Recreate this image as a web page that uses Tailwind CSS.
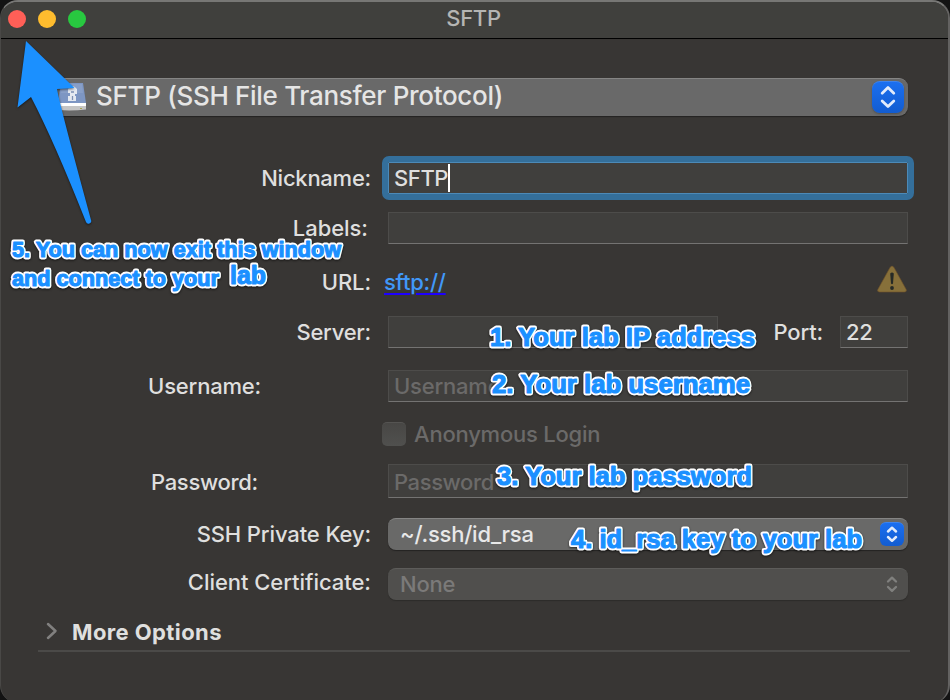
<!DOCTYPE html>
<html lang="en">
<head>
<meta charset="utf-8">
<title>SFTP</title>
<script src="https://cdn.jsdelivr.net/npm/@tailwindcss/browser@4"></script>
</head>
<body class="bg-black">
<div class="relative w-[950px] h-[700px] overflow-hidden bg-[#131313] font-['Inter','Noto_Sans',sans-serif] font-[450] text-[22px] text-[#dfdfde]">
  <main class="w-[950px] h-[703px] flex flex-col overflow-hidden rounded-[18px] bg-[#383634] border-t-2 border-r-2 border-t-[#777775] border-r-[#636261] border-l border-l-[#494846]">
    <header class="relative h-[37px] shrink-0 flex items-center gap-3 pl-[7px] pb-[2px] bg-[#40403d] border-b-[1.5px] border-black">
      <i class="size-[18px] -mt-px rounded-full bg-[#ff5f57]"></i>
      <i class="size-[18px] -mt-px rounded-full bg-[#febc2e]"></i>
      <i class="size-[18px] -mt-px rounded-full bg-[#28c840]"></i>
      <h1 class="absolute inset-x-0 top-0 pr-[2px] text-center leading-[33px] text-[#b5b5b3] tracking-[-0.3px] font-[450]">SFTP</h1>
    </header>

    <section class="flex flex-col pl-[37px] pr-[40px] pt-[39px]">
      <div class="h-[38px] flex items-center ml-2 pl-[12px] pr-1 rounded-[9px] bg-[#696969] border-t border-[#858584] shadow-[0_1px_1px_#242322]">
        <svg class="w-[28px] h-[30px] shrink-0 -mt-[3px]" viewBox="0 0 28 30">
          <path d="M3 2H25L28 22H0Z" fill="#7d96c3"/>
          <path d="M4 3H24L25 12H3Z" fill="#889fc8"/>
          <path d="M10 12V8Q14 2 19 8V13H17V15H18V20H10V15H12V12Z" fill="#e4e9f1"/>
          <path d="M13 11H16M14.500 15V19" stroke="#7e91b5" stroke-width="1.300"/>
          <path d="M0 22H28V28.500Q14 30 0 29Z" fill="#c5c5c5"/>
          <path d="M0 22H28V25H0Z" fill="#fff"/>
          <path d="M22 27.500H24" stroke="#a8a44f"/>
        </svg>
        <span class="ml-[10px] -mt-[3px] text-[26px] leading-[34px] tracking-[-0.31px] text-[#e5e5e5]">SFTP (SSH File Transfer Protocol)</span>
        <span class="ml-auto size-[32px] rounded-[8px] bg-linear-to-b from-[#1b6ff0] to-[#125cd0] shadow-[0_1px_2px_#3337] border-t border-[#3b83ef] -mt-px">
          <svg class="size-[31px]" viewBox="0 0 32 32" fill="none" stroke="#e2ebfb" stroke-width="2.900" stroke-linecap="round" stroke-linejoin="round"><path d="M10.500 11.500L16.500 5.700L22.500 11.500M10.500 19.500L16.500 25.300L22.500 19.500"/></svg>
        </span>
      </div>

      <div class="h-[32px] mt-[46px] flex items-center">
        <label class="w-[333px] mr-[17px] text-right whitespace-nowrap tracking-[-0.25px]">Nickname:</label>
        <div class="flex-1 h-[32px] flex items-center pl-[5px] bg-[#403f3d] border border-[#4c8ab8] outline-[6px] outline-[#346f9b] rounded-[1px]"><span class="tracking-[-0.4px]">SFTP</span><i class="w-[2px] h-[28px] bg-white"></i></div>
      </div>

      <div class="h-[32px] mt-[18px] flex items-center">
        <label class="w-[330px] mr-[20px] text-right tracking-[-0.05px]">Labels:</label>
        <div class="flex-1 h-[32px] bg-[#403f3d] border border-[#4d4c4a] border-b-[#747372]"></div>
      </div>

      <div class="h-[32px] mt-[22px] flex items-center">
        <label class="w-[333px] mr-[13px] text-right tracking-[-0.1px]">URL:</label>
        <a class="text-[#4198f8] underline decoration-[#1e00ff] decoration-2 underline-offset-[3px] tracking-[-0.25px]">sftp://</a>
        <svg class="ml-auto mr-px w-[30px] h-[28px] mb-[7px]" viewBox="0 0 30 28">
          <path d="M13 2.500Q15 -.5 17 2.500L29.200 24.500Q30 27 27.500 27H2.500Q0 27 .8 24.500Z" fill="#87703a" stroke="#705329" stroke-width=".6"/>
          <path d="M13.200 8.500Q15 6.500 16.800 8.500L16 18.500Q15 20 14 18.500Z" fill="#262a26"/><circle cx="15" cy="23" r="1.900" fill="#262a26"/>
        </svg>
      </div>

      <div class="h-[32px] mt-[18px] flex items-center">
        <label class="w-[333px] mr-[17px] text-right tracking-[-0.25px]">Server:</label>
        <div class="w-[330px] h-[32px] bg-[#403f3d] border border-[#4d4c4a] border-b-[#747372]"></div>
        <label class="w-[105px] mr-[17px] text-right tracking-[-0.15px]">Port:</label>
        <div class="w-[68px] h-[32px] flex items-center pl-[5px] bg-[#403f3d] border border-[#4d4c4a] border-b-[#747372] tracking-[-0.3px]">22</div>
      </div>

      <div class="h-[32px] mt-[22px] flex items-center">
        <label class="w-[223px] mr-[127px] text-right tracking-[-0.2px]">Username:</label>
        <div class="flex-1 h-[32px] flex items-center pl-[5px] bg-[#403f3d] border border-[#4d4c4a] border-b-[#747372] text-[#6b6a69] tracking-[-0.2px]">Username</div>
      </div>

      <div class="h-[24px] mt-[20px] ml-[344px] flex items-center gap-[8px] text-[#6b6a69]">
        <i class="size-[24px] rounded-[5px] bg-linear-to-b from-[#484745] to-[#50504e] border-t border-[#555452]"></i>
        <span class="tracking-[-0.22px]">Anonymous Login</span>
      </div>

      <div class="h-[34px] mt-[18px] flex items-center">
        <label class="w-[220px] mr-[130px] pt-[2px] text-right tracking-[-0.3px]">Password:</label>
        <div class="flex-1 h-[34px] flex items-center pl-[5px] pt-[2px] bg-[#403f3d] border border-[#4d4c4a] border-b-[#747372] text-[#6b6a69] tracking-[-0.4px]">Password</div>
      </div>

      <div class="h-[32px] mt-[20px] flex items-center">
        <label class="w-[333px] mr-[17px] text-right whitespace-nowrap tracking-[-0.12px]">SSH Private Key:</label>
        <div class="flex-1 h-[32px] flex items-center pl-[12px] pr-1 rounded-[8px] bg-[#696968] border-t border-[#858584] shadow-[0_1px_1px_#242322] text-[#e8e8e8]"><span class="tracking-[-0.23px]">~/.ssh/id_rsa</span>
          <span class="ml-auto size-[24px] rounded-[6px] bg-linear-to-b from-[#1b6ff0] to-[#125cd0] border-t border-[#3b83ef] -mt-px">
            <svg class="size-[24px]" viewBox="0 0 24 24" fill="none" stroke="#e2ebfb" stroke-width="2.500" stroke-linecap="round" stroke-linejoin="round"><path d="M8 8.500L12 4.700L16 8.500M8 14L12 17.800L16 14"/></svg>
          </span>
        </div>
      </div>

      <div class="h-[32px] mt-[18px] flex items-center">
        <label class="w-[333px] mr-[17px] pb-[3px] text-right whitespace-nowrap tracking-[-0.04px]">Client Certificate:</label>
        <div class="flex-1 h-[32px] flex items-center pl-[12px] pr-1 rounded-[8px] bg-[#504f4d] border-t border-[#5d5c5a] shadow-[0_1px_1px_#2d2c2a] text-[#7b7a79]"><span class="tracking-[-0.2px]">None</span>
          <svg class="ml-auto size-[24px]" viewBox="0 0 24 24" fill="none" stroke="#80807e" stroke-width="2.300" stroke-linecap="round" stroke-linejoin="round"><path d="M8 8.500L12 4.700L16 8.500M8 14L12 17.800L16 14"/></svg>
        </div>
      </div>

      <div class="h-[52px] -mr-[2px] flex items-center border-b-2 border-[#4b4a48] pt-[14px]">
        <svg class="ml-[8px] w-[12px] h-[18px] -mt-[3px]" viewBox="0 0 12 18" fill="none" stroke="#81807f" stroke-width="2.500" stroke-linecap="round" stroke-linejoin="round"><path d="M2 2L9.500 9L2 16"/></svg>
        <h2 class="ml-[14px] font-bold tracking-[0.4px]">More Options</h2>
      </div>
    </section>
  </main>

  <!-- Instruction callouts over the window -->
  <svg class="absolute inset-0 w-[950px] h-[700px]" viewBox="0 0 950 700">
    <path class="drop-shadow-[0_1px_1px_#0008]" d="M26 41L74.500 88L57 89Q60 106 91 220A2.600 2.600 0 0 1 86 222Q54 141 31 97L17.500 107.500Z" fill="#1b90ff"/>
    <defs>
      <g id="callouts" class="font-['Liberation_Sans',sans-serif] font-bold" font-size="26" stroke-linejoin="round">
        <text x="12" y="257" font-size="22.500" textLength="329" lengthAdjust="spacingAndGlyphs">5. You can now exit this window</text>
        <text x="12" y="286" font-size="22.500" textLength="207" lengthAdjust="spacingAndGlyphs">and connect to your</text>
        <text x="230" y="283.500" font-size="25" textLength="36" lengthAdjust="spacingAndGlyphs">lab</text>
        <text x="490" y="345.500" textLength="265" lengthAdjust="spacingAndGlyphs">1. Your lab IP address</text>
        <text x="492" y="392.500" textLength="258" lengthAdjust="spacingAndGlyphs">2. Your lab username</text>
        <text x="497" y="484.500" textLength="255" lengthAdjust="spacingAndGlyphs">3. Your lab password</text>
        <text x="571" y="547.500" textLength="291" lengthAdjust="spacingAndGlyphs">4. id_rsa key to your lab</text>
      </g>
    </defs>
    <use href="#callouts" class="drop-shadow-[0_1.5px_1px_#0009]" fill="#fff" stroke="#fff" stroke-width="4.800"/>
    <use href="#callouts" fill="#1b90ff" stroke="#1b90ff" stroke-width="1.200"/>
  </svg>
</div>
</body>
</html>
